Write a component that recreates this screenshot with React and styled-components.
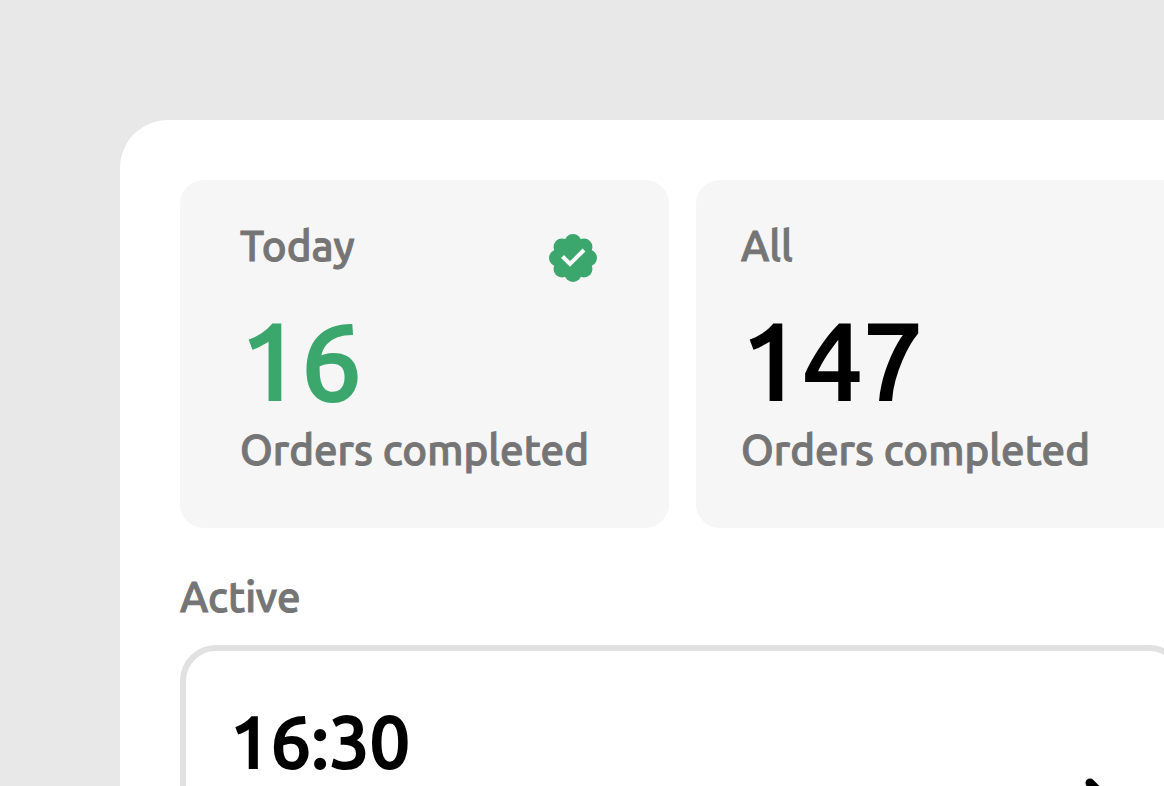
import React from "react";
import styled, { createGlobalStyle } from "styled-components";

const GlobalStyle = createGlobalStyle`
  * { box-sizing: border-box; }
  body {
    margin: 0;
    background: #e8e8e8;
    color: #000;
    font-family: "Ubuntu Medium", Ubuntu, "Noto Sans", sans-serif;
    font-weight: 500;
  }
  h1, h2, p { margin: 0; font-weight: inherit; }
`;

const Page = styled.main`
  display: flex;
  height: 100vh;
  padding: 120px 0 0 120px;
  overflow: hidden;
`;

/* The panel runs past the right edge of the window. */
const Panel = styled.div`
  flex: 1 0 auto;
  width: calc(100% + 81px);
  min-height: 100vh;
  padding: 60px;
  border-radius: 48px;
  background: #fff;
`;

const Stats = styled.section`
  display: grid;
  grid-template-columns: repeat(2, minmax(0, 1fr));
  gap: 27px;
`;

const StatCard = styled.article`
  padding: 42px 72px 54px ${(p) => p.$inset}px;
  border-radius: 24px;
  background: #f6f6f6;
`;

const StatHeader = styled.header`
  display: flex;
  justify-content: space-between;
  align-items: flex-start;
  height: 72px;
`;

const Label = styled.p`
  color: #757575;
  font-size: 42px;
  line-height: 48px;
  white-space: nowrap;
  -webkit-text-stroke: 1px currentColor;
`;

const StatValue = styled.p`
  color: ${(p) => p.$color};
  font-size: 108px;
  line-height: 132px;
  -webkit-text-stroke: 2px currentColor;
`;

const Badge = styled.svg`
  width: 48px;
  height: 48px;
  margin-top: 12px;
`;

const Active = styled.section`
  display: grid;
  gap: 24px;
  margin-top: 45px;
`;

const OrderCard = styled.article`
  display: flex;
  justify-content: space-between;
  align-items: center;
  min-height: 312px;
  padding: 49px 44px;
  border: 6px solid #e1e1e1;
  border-radius: 36px;
`;

const OrderTime = styled.time`
  align-self: flex-start;
  font-size: 72px;
  line-height: 84px;
  -webkit-text-stroke: 2px currentColor;
`;

const Chevron = styled.svg`
  width: 72px;
  height: 72px;
`;

const lobes = [0, 45, 90, 135, 180, 225, 270, 315];

function VerifiedBadge() {
  return (
    <Badge viewBox="-24 -24 48 48" aria-hidden="true">
      <g fill="#3ba76d">
        <circle r="18" />
        {lobes.map((angle) => (
          <circle key={angle} cy="-15.5" r="8.5" transform={`rotate(${angle})`} />
        ))}
      </g>
      <path d="M-10.5 -1.5 -3 6 11 -8" fill="none" stroke="#fff" strokeWidth="4" />
    </Badge>
  );
}

function Stat({ title, value, color = "#000", inset, verified }) {
  return (
    <StatCard $inset={inset}>
      <StatHeader>
        <Label as="h2">{title}</Label>
        {verified && <VerifiedBadge />}
      </StatHeader>
      <StatValue $color={color}>{value}</StatValue>
      <Label>Orders completed</Label>
    </StatCard>
  );
}

export default function App() {
  return (
    <>
      <GlobalStyle />
      <Page>
        <Panel>
          <Stats>
            <Stat title="Today" value="16" color="#3ba76d" inset={60} verified />
            <Stat title="All" value="147" inset={45} />
          </Stats>
          <Active>
            <Label as="h2">Active</Label>
            <OrderCard>
              <OrderTime>16:30</OrderTime>
              <Chevron viewBox="0 0 24 24" fill="none" stroke="#000" strokeWidth="3" strokeLinecap="round" strokeLinejoin="round" aria-hidden="true">
                <path d="m9 6 6 6-6 6" />
              </Chevron>
            </OrderCard>
          </Active>
        </Panel>
      </Page>
    </>
  );
}
